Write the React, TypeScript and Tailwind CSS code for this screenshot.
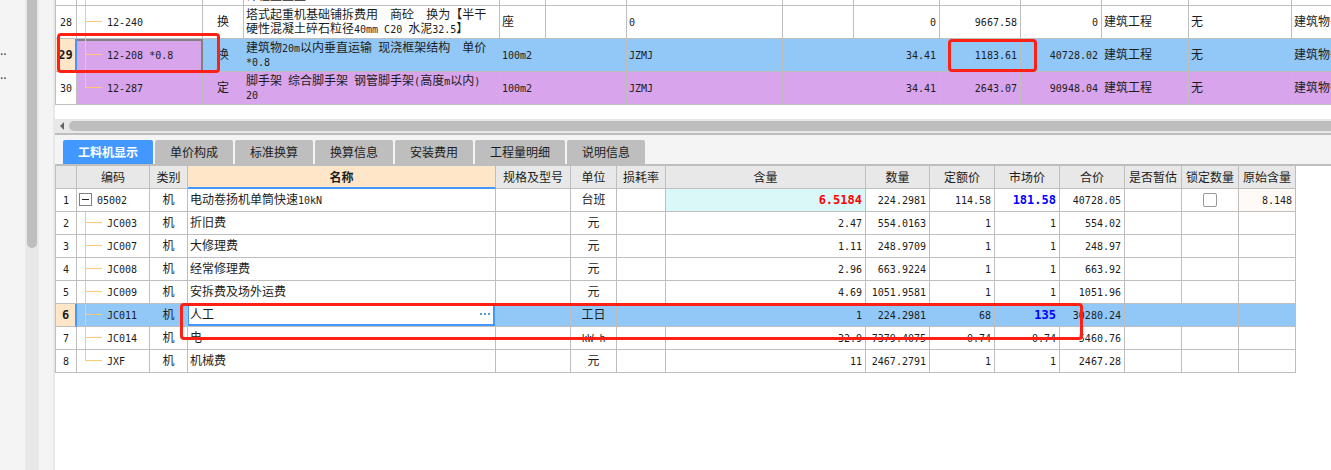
import { Fragment } from "react";
import type { ReactNode } from "react";
import clsx from "clsx";

type Tone = "plain" | "selected" | "purple";

type QuotaRow = {
  no: number;
  code: string;
  kind: string;
  name: string;
  unit: string;
  expr: string;
  qty: string;
  price: string;
  total: string;
  tone: Tone;
};

type Resource = {
  code: string;
  name: string;
  unit: string;
  content: string;
  qty: string;
  base: string;
  market: string;
  total: string;
};

const quotas: QuotaRow[] = [
  { no: 28, code: "12-240", kind: "换", name: "塔式起重机基础铺拆费用  商砼  换为【半干\n硬性混凝土碎石粒径40mm C20 水泥32.5】", unit: "座", expr: "0", qty: "0", price: "9667.58", total: "0", tone: "plain" },
  { no: 29, code: "12-208 *0.8", kind: "换", name: "建筑物20m以内垂直运输 现浇框架结构  单价\n*0.8", unit: "100m2", expr: "JZMJ", qty: "34.41", price: "1183.61", total: "40728.02", tone: "selected" },
  { no: 30, code: "12-287", kind: "定", name: "脚手架 综合脚手架 钢管脚手架(高度m以内)\n20", unit: "100m2", expr: "JZMJ", qty: "34.41", price: "2643.07", total: "90948.04", tone: "purple" },
];

const resources: Resource[] = [
  { code: "05002", name: "电动卷扬机单筒快速10kN", unit: "台班", content: "6.5184", qty: "224.2981", base: "114.58", market: "181.58", total: "40728.05" },
  { code: "JC003", name: "折旧费", unit: "元", content: "2.47", qty: "554.0163", base: "1", market: "1", total: "554.02" },
  { code: "JC007", name: "大修理费", unit: "元", content: "1.11", qty: "248.9709", base: "1", market: "1", total: "248.97" },
  { code: "JC008", name: "经常修理费", unit: "元", content: "2.96", qty: "663.9224", base: "1", market: "1", total: "663.92" },
  { code: "JC009", name: "安拆费及场外运费", unit: "元", content: "4.69", qty: "1051.9581", base: "1", market: "1", total: "1051.96" },
  { code: "JC011", name: "人工", unit: "工日", content: "1", qty: "224.2981", base: "68", market: "135", total: "30280.24" },
  { code: "JC014", name: "电", unit: "kW·h", content: "32.9", qty: "7379.4075", base: "0.74", market: "0.74", total: "5460.76" },
  { code: "JXF", name: "机械费", unit: "元", content: "11", qty: "2467.2791", base: "1", market: "1", total: "2467.28" },
];

const tabs = ["工料机显示", "单价构成", "标准换算", "换算信息", "安装费用", "工程量明细", "说明信息"];

const headers = ["", "编码", "类别", "名称", "规格及型号", "单位", "损耗率", "含量", "数量", "定额价", "市场价", "合价", "是否暂估", "锁定数量", "原始含量"];

const quotaCols = ["w-[21px]", "w-[126px]", "w-[41px]", "w-[256px]", "w-[46px]", "w-[81px]", "w-[156px]", "w-[71px]", "w-[86px]", "w-[81px]", "w-[81px]", "w-[87px]", "w-[103px]", "w-[120px]"];

const resourceCols = ["w-[21px]", "w-[73px]", "w-[38px]", "w-[308px]", "w-[75px]", "w-[46px]", "w-[49px]", "w-[200px]", "w-[64px]", "w-[65px]", "w-[65px]", "w-[65px]", "w-[57px]", "w-[57px]", "w-[57px]"];

// Half-width characters take half the cell of a Chinese glyph
function Mixed({ text, bold }: { text: string; bold?: boolean }) {
  return (
    <>
      {text.split(/([ -~·]+)/).map((part, i) =>
        i % 2 ? (
          <span key={i} className={clsx("font-['DejaVu_Sans_Mono',monospace] leading-none", bold ? "text-[12px]" : "text-[10px]")}>
            {part}
          </span>
        ) : (
          <Fragment key={i}>{part}</Fragment>
        )
      )}
    </>
  );
}

function Cell({ children, className, bold }: { children?: ReactNode; className?: string; bold?: boolean }) {
  const isText = typeof children === "string";
  return (
    <td
      className={clsx(
        "overflow-hidden border-r border-b border-[#bebebe] px-0 pt-0 whitespace-pre",
        isText ? "pb-0.5" : "pb-0",
        bold && "font-bold",
        className
      )}
    >
      {isText ? <Mixed text={children} bold={bold} /> : children}
    </td>
  );
}

function Branch({ last, tall }: { last?: boolean; tall?: boolean }) {
  return (
    <span aria-hidden="true" className={clsx("flex w-[17px] shrink-0 flex-col self-start", tall ? "h-8" : "h-[22px]")}>
      <span className={clsx("shrink-0 border-b border-l border-[#ffc878]", tall ? "h-4" : "h-[11px]")} />
      {!last && <span className="flex-1 border-l border-[#ffc878]" />}
    </span>
  );
}

function LeftRail() {
  return (
    <aside className="flex shrink-0 bg-[#f4f4f4]">
      <div className="w-[25px] overflow-hidden pt-[38px] text-[12px] leading-6 text-[#1a3c6e]">
        <div>..</div>
        <div>..</div>
      </div>
      <div className="flex w-[14px] justify-center bg-[#e8e8e8]">
        <div className="h-[248px] w-[10px] rounded-b-full bg-[#bebebe]" />
      </div>
      <div className="w-4 border-r-2 border-[#e8e8e8]" />
    </aside>
  );
}

function QuotaTable() {
  return (
    <table className="w-0 table-fixed border-separate border-spacing-0 border-l border-[#bebebe] leading-[14px]">
      <colgroup>
        {quotaCols.map((w, i) => <col key={i} className={w} />)}
      </colgroup>
      <tbody>
        <tr>
          {quotaCols.map((_, i) => (
            <Cell key={i}>
              <div className={clsx("flex h-[5px] items-end overflow-hidden", i === 3 && "pb-[3px] pl-0.5")}>
                {i === 1 && <span className="ml-2 h-full border-l border-[#ffc878]" />}
                {i === 3 && "计程里重量"}
              </div>
            </Cell>
          ))}
        </tr>
        {quotas.map((q) => {
          const selected = q.tone === "selected";
          return (
            <tr
              key={q.no}
              className={clsx("h-[33px]", selected && "bg-[#92c8f7]", q.tone === "purple" && "bg-[#d8a4ec]")}
            >
              <Cell bold={selected} className={clsx("text-center", selected ? "border-r-2 border-r-[#4398ff] bg-[#ffe6c8]" : "bg-white")}>
                {String(q.no)}
              </Cell>
              <Cell className={clsx(selected && "border-r-2 border-r-[#808080] bg-[#d8a4ec] shadow-[inset_0_2px_#808080]")}>
                <div className="flex h-8 items-center pb-0.5 pl-2">
                  <Branch tall last={q.no === 30} />
                  <span className="ml-[5px]"><Mixed text={q.code} /></span>
                </div>
              </Cell>
              <Cell className="text-center">{q.kind}</Cell>
              <Cell className="pl-0.5">{q.name}</Cell>
              <Cell className="pl-0.5">{q.unit}</Cell>
              <Cell />
              <Cell className="pl-0.5">{q.expr}</Cell>
              <Cell />
              <Cell className="pr-[3px] text-right">{q.qty}</Cell>
              <Cell className="pr-[3px] text-right">{q.price}</Cell>
              <Cell className="pr-[3px] text-right">{q.total}</Cell>
              <Cell className="pl-0.5">建筑工程</Cell>
              <Cell className="pl-0.5">无</Cell>
              <Cell className="pl-0.5">建筑物垂直运输</Cell>
            </tr>
          );
        })}
      </tbody>
    </table>
  );
}

function ResourceTable() {
  return (
    <table className="w-0 table-fixed border-separate border-spacing-0 border-l border-[#bebebe] leading-[18px]">
      <colgroup>
        {resourceCols.map((w, i) => <col key={i} className={w} />)}
      </colgroup>
      <thead>
        <tr className="h-[23px]">
          {headers.map((h) => (
            <th
              key={h || "no"}
              className={clsx(
                "overflow-hidden border-r border-b border-[#bebebe] p-0 whitespace-nowrap",
                h === "名称" ? "border-b-2 border-b-[#4398ff] bg-[#ffe6c8] font-bold" : "bg-[#e8e8e8] font-normal"
              )}
            >
              {h}
            </th>
          ))}
        </tr>
      </thead>
      <tbody>
        {resources.map((r, i) => {
          const selected = r.code === "JC011";
          const parent = i === 0;
          return (
            <tr key={r.code} className={clsx("h-[23px]", selected && "bg-[#92c8f7]")}>
              <Cell bold={selected} className={clsx("text-center", selected && "border-r-2 border-r-[#4398ff] bg-[#ffe6c8]")}>
                {String(i + 1)}
              </Cell>
              <Cell>
                <div className={clsx("flex h-[22px] items-center pb-0.5", parent ? "pl-0.5" : "pl-2")}>
                  {parent ? (
                    <button type="button" aria-label="折叠" className="flex size-[13px] items-center justify-center border border-[#808080] bg-white">
                      <span className="w-[7px] border-t border-[#222]" />
                    </button>
                  ) : (
                    <Branch last={i === resources.length - 1} />
                  )}
                  <span className="ml-[5px]"><Mixed text={r.code} /></span>
                </div>
              </Cell>
              <Cell className="text-center">机</Cell>
              {selected ? (
                <Cell>
                  <div className="flex h-[22px] border-2 border-t-0 border-l-1 border-[#4398ff] bg-white">
                    <input aria-label="名称" defaultValue={r.name} className="min-w-0 flex-1 pl-px outline-none" />
                    <button type="button" aria-label="更多" className="flex items-center gap-0.5 px-[3px]">
                      <span className="size-0.5 bg-[#5a9bd0]" />
                      <span className="size-0.5 bg-[#5a9bd0]" />
                      <span className="size-0.5 bg-[#5a9bd0]" />
                    </button>
                  </div>
                </Cell>
              ) : (
                <Cell className="pl-0.5">{r.name}</Cell>
              )}
              <Cell />
              <Cell className="text-center">{r.unit}</Cell>
              <Cell />
              <Cell bold={parent} className={clsx("pr-[3px] text-right", parent && "bg-[#daf8f8] text-[#ff0000]")}>{r.content}</Cell>
              <Cell className="pr-[3px] text-right">{r.qty}</Cell>
              <Cell className="pr-[3px] text-right">{r.base}</Cell>
              <Cell bold={parent || selected} className={clsx("pr-[3px] text-right", (parent || selected) && "text-[#0000ff]")}>{r.market}</Cell>
              <Cell className="pr-[3px] text-right">{r.total}</Cell>
              <Cell />
              <Cell>
                {parent && (
                  <input type="checkbox" aria-label="锁定数量" className="mx-auto block size-[14px] appearance-none rounded-xs border border-[#999] bg-white" />
                )}
              </Cell>
              <Cell className={clsx("pr-[3px] text-right", parent && "bg-[#fffaf5]")}>{parent ? "8.148" : ""}</Cell>
            </tr>
          );
        })}
      </tbody>
    </table>
  );
}

export default function App() {
  return (
    <div className="flex min-h-screen overflow-hidden bg-white font-['Noto_Sans_CJK_SC',sans-serif] text-[12px] text-[#1c1c1c]">
      <LeftRail />
      <main className="min-w-0 flex-1">
        <section className="relative overflow-hidden pb-[14px]">
          <QuotaTable />
          {/* review marks */}
          <div className="pointer-events-none absolute top-[33px] left-[2px] h-10 w-[163px] rounded-sm border-3 border-[#ff2015]" />
          <div className="pointer-events-none absolute top-[39px] left-[893px] h-[33px] w-[89px] rounded-sm border-3 border-[#ff2015]" />
        </section>

        <div className="flex h-4 items-center border-b-2 border-[#bebebe] bg-[#e8e8e8]">
          <svg viewBox="0 0 14 10" className="h-[10px] w-[14px] shrink-0" aria-hidden="true">
            <path d="M9 1v8L5 5z" fill="#666" />
          </svg>
          <div className="h-[10px] flex-1 rounded-l-full bg-[#bebebe]" />
        </div>

        <div role="tablist" className="flex gap-0.5 border-b-2 border-[#bebebe] bg-[#f4f4f4] pt-[5px] pl-2">
          {tabs.map((tab, i) => (
            <button
              key={tab}
              type="button"
              role="tab"
              aria-selected={i === 0}
              className={clsx(
                "h-6 rounded-t-xs text-center",
                tab.length === 5 ? "w-[90px]" : "w-[78px]",
                i === 0 ? "bg-[#4398ff] font-bold text-white" : "bg-[#bebebe]"
              )}
            >
              {tab}
            </button>
          ))}
        </div>

        <section className="relative overflow-hidden">
          <ResourceTable />
          <div className="pointer-events-none absolute top-[137px] left-[125px] h-[37px] w-[903px] rounded-sm border-3 border-[#ff2015]" />
        </section>
      </main>
    </div>
  );
}
